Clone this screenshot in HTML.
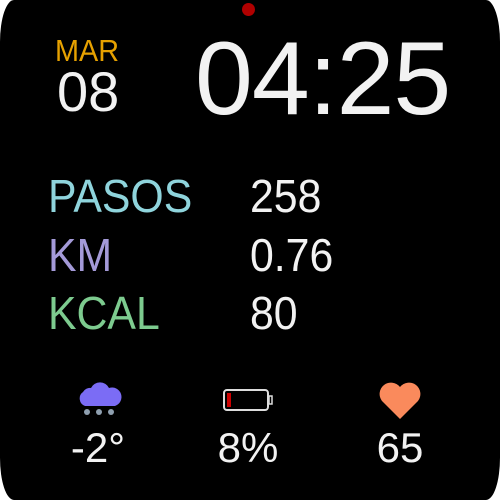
<!DOCTYPE html>
<html><head><style>
html,body{margin:0;padding:0;background:#fff;width:500px;height:500px;overflow:hidden}
.w{position:absolute;left:0;top:0;width:500px;height:500px;background:#000;border-radius:14px / 42px;font-family:"Liberation Sans",sans-serif}
.t{position:absolute;white-space:nowrap;line-height:1;color:#f2f2f2}
.s{transform:scaleX(0.93);transform-origin:left top}
</style></head><body><div class="w">
<div style="position:absolute;left:242px;top:3px;width:13px;height:13px;border-radius:50%;background:#b00000"></div>
<div class="t s" style="left:55px;top:35px;font-size:31px;color:#e6a100">MAR</div>
<div class="t" style="left:57px;top:64px;font-size:56px">08</div>
<div class="t" style="left:195px;top:27px;font-size:104px;letter-spacing:-1px">04:25</div>
<div class="t s" style="left:48px;top:173px;font-size:46px;color:#8fd4dc">PASOS</div>
<div class="t s" style="left:250px;top:173px;font-size:46px">258</div>
<div class="t s" style="left:48px;top:232px;font-size:46px;color:#a49ad8">KM</div>
<div class="t s" style="left:250px;top:232px;font-size:46px">0.76</div>
<div class="t s" style="left:48px;top:290px;font-size:46px;color:#7dcb8f">KCAL</div>
<div class="t s" style="left:250px;top:290px;font-size:46px">80</div>
<svg style="position:absolute;left:75px;top:378px" width="48" height="42" viewBox="0 0 48 42">
<path d="M10 28 A8 8 0 0 1 8 14 A8 8 0 0 1 16 10 A10 10 0 0 1 34 10 A9 9 0 0 1 40 28 Z" fill="#7b6cf5"/>
<circle cx="12" cy="34" r="3" fill="#8fa0b0"/><circle cx="24" cy="34" r="3" fill="#8fa0b0"/><circle cx="36" cy="34" r="3" fill="#8fa0b0"/>
</svg>
<svg style="position:absolute;left:222px;top:388px" width="54" height="24" viewBox="0 0 54 24">
<rect x="2" y="2" width="44" height="20" rx="3" fill="none" stroke="#ddd" stroke-width="2"/>
<rect x="5" y="5" width="4" height="14" fill="#c00"/>
<rect x="47" y="8" width="3" height="8" fill="none" stroke="#ddd" stroke-width="1.5"/>
</svg>
<svg style="position:absolute;left:378px;top:381px" width="44" height="40" viewBox="0 0 44 40">
<path d="M22 38 L4 20 A10 10 0 0 1 22 6 A10 10 0 0 1 40 20 Z" fill="#fa8a5c"/>
</svg>
<div class="t" style="left:98px;top:427px;font-size:42px;transform:translateX(-50%)">-2°</div>
<div class="t" style="left:248px;top:427px;font-size:42px;transform:translateX(-50%)">8%</div>
<div class="t" style="left:400px;top:427px;font-size:42px;transform:translateX(-50%)">65</div>
</div></body></html>
